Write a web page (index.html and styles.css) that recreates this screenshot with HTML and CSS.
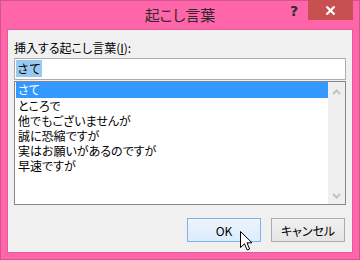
FILE: index.html
```html
<!DOCTYPE html>
<html lang="ja">

<head>
    <meta charset="UTF-8">
    <meta name="viewport" content="width=device-width, initial-scale=1.0">
    <title>起こし言葉</title>
    <link rel="stylesheet" href="styles.css">
</head>

<body>

    <div class="window">
        <div class="titlebar">
            <div></div>
            <div class="title">起こし言葉</div>
            <div class="controls">
                <span class="help">?</span>
                <span class="close">
                    <svg width="11" height="9" viewBox="0 0 11 9">
                        <path d="M1.5 0.5 L9.5 8.5 M9.5 0.5 L1.5 8.5" stroke="#fff" stroke-width="2.2" fill="none" />
                    </svg>
                </span>
            </div>
        </div>

        <div class="client">
            <div class="label">挿入する起こし言葉(<span class="u">I</span>):</div>
            <div class="textbox"><span class="sel">さて</span></div>

            <div class="listbox">
                <div class="items">
                    <div class="item selected">さて</div>
                    <div class="item">ところで</div>
                    <div class="item">他でもございませんが</div>
                    <div class="item">誠に恐縮ですが</div>
                    <div class="item">実はお願いがあるのですが</div>
                    <div class="item">早速ですが</div>
                </div>
                <div class="scrollbar">
                    <svg width="9" height="6" viewBox="0 0 9 6">
                        <path d="M1 5 L4.5 1.5 L8 5" stroke="#c2c2c2" stroke-width="2" fill="none" />
                    </svg>
                    <svg width="9" height="6" viewBox="0 0 9 6">
                        <path d="M1 1 L4.5 4.5 L8 1" stroke="#c2c2c2" stroke-width="2" fill="none" />
                    </svg>
                </div>
            </div>

            <div class="buttons">
                <button class="btn default">OK</button>
                <button class="btn">キャンセル</button>
            </div>
        </div>

        <!-- mouse pointer over the OK button -->
        <svg class="cursor" width="13" height="20" viewBox="0 0 13 20">
            <path d="M0.5 0.5 L0.5 16.5 L4.5 12.8 L7.2 19 L9.6 18 L7 11.8 L12 11.8 Z" fill="#fff" stroke="#000" stroke-width="1" />
        </svg>
    </div>

</body>

</html>
```

FILE: styles.css
```css
* {
    box-sizing: border-box;
}

body {
    margin: 0;
    background-color: #ff65a9;
    font-family: "Noto Sans CJK JP", sans-serif;
    font-size: 12px;
    color: #000;
}

.window {
    position: relative;
    display: flex;
    flex-direction: column;
    width: 360px;
    height: 260px;
    background-color: #ff65a9;
    border: 1px solid #d2558f;
}

.titlebar {
    display: grid;
    grid-template-columns: 1fr auto 1fr;
    height: 28px;
}

.title {
    padding-top: 5px;
    font-size: 15px;
    line-height: 18px;
    color: #2e2a2d;
    font-feature-settings: "palt";
}

.controls {
    display: flex;
    justify-content: flex-end;
    align-items: flex-start;
    padding-right: 6px;
}

.help {
    margin-top: 2px;
    margin-right: 10px;
    font-family: "DejaVu Sans", sans-serif;
    font-weight: bold;
    font-size: 14px;
    line-height: 16px;
    color: #2b2b2b;
}

.close {
    display: flex;
    justify-content: center;
    align-items: center;
    width: 45px;
    height: 20px;
    margin-top: -1px;
    background-color: #c75050;
}

.client {
    flex: 1;
    margin: 0 6px 6px;
    padding: 10px 6px 0;
    background-color: #f0f0f0;
    border: 1px solid #e55b9c;
}

.label {
    line-height: 16px;
    font-feature-settings: "palt";
}

.u {
    text-decoration: underline;
}

.textbox {
    height: 22px;
    margin-top: 2px;
    padding: 2px 1px;
    background-color: #fff;
    border: 1px solid #abadb3;
    line-height: 16px;
}

.sel {
    background-color: #99c9ef;
    padding: 0 1px;
}

.listbox {
    display: flex;
    height: 124px;
    margin-top: 1px;
    background-color: #fff;
    border: 1px solid #828790;
}

.items {
    flex: 1;
    padding-left: 1px;
    font-feature-settings: "palt";
}

.item {
    height: 15px;
    padding-left: 2px;
    line-height: 15px;
}

.item.selected {
    height: 16px;
    line-height: 16px;
    background-color: #3399ff;
    color: #fff;
}

.scrollbar {
    display: flex;
    flex-direction: column;
    justify-content: space-between;
    align-items: center;
    width: 17px;
    padding: 7px 0 5px;
    background-color: #efefef;
}

.buttons {
    display: flex;
    justify-content: flex-end;
    gap: 10px;
    margin-top: 13px;
    padding-right: 1px;
}

.btn {
    width: 74px;
    height: 24px;
    padding: 0;
    font-family: "Noto Sans CJK JP", sans-serif;
    font-size: 12px;
    color: #000;
    background: linear-gradient(#f0f0f0, #e5e5e5);
    border: 1px solid #acacac;
    font-feature-settings: "palt";
}

.btn.default {
    background: linear-gradient(#ecf4fc, #dcecfc);
    border-color: #7eb4ea;
}

.cursor {
    position: absolute;
    left: 239px;
    top: 230px;
}
```
